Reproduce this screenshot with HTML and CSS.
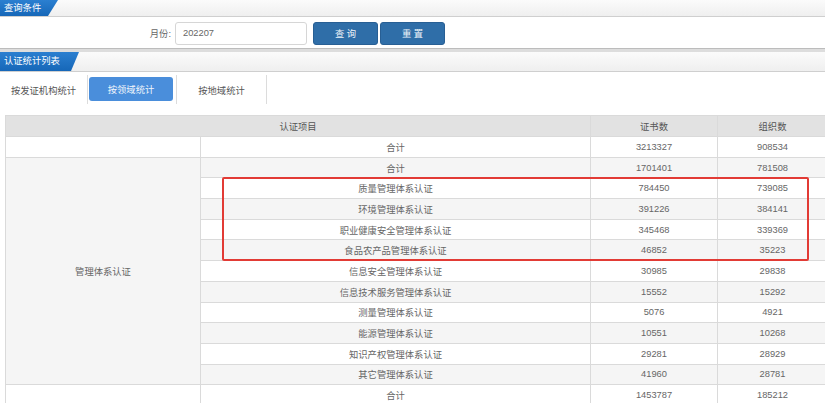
FILE: index.html
```html
<!DOCTYPE html>
<html lang="zh">
<head>
<meta charset="utf-8">
<title>认证统计</title>
<link rel="stylesheet" href="styles.css">
</head>
<body>
<div class="panel-head">
  <span class="panel-tab tab-query">查询条件</span>
</div>
<div class="query-row">
  <label class="q-label" for="month">月份:</label>
  <input class="q-input" id="month" type="text" value="202207">
  <button class="btn btn-search">查 询</button>
  <button class="btn btn-reset">重 置</button>
</div>
<div class="panel-head second">
  <span class="panel-tab tab-list">认证统计列表</span>
</div>
<div class="tabs">
  <div class="tab tab-org">按发证机构统计</div>
  <div class="tab tab-field"><span class="tab-active">按领域统计</span></div>
  <div class="tab tab-region">按地域统计</div>
</div>
<div class="table-wrap">
  <table class="stats">
    <colgroup>
      <col class="c1"><col class="c2"><col class="c3"><col class="c4">
    </colgroup>
    <thead>
      <tr><th colspan="2">认证项目</th><th>证书数</th><th>组织数</th></tr>
    </thead>
    <tbody>
      <tr class="w"><td></td><td>合计</td><td>3213327</td><td>908534</td></tr>
      <tr class="g"><td class="group" rowspan="11">管理体系认证</td><td>合计</td><td>1701401</td><td>781508</td></tr>
      <tr class="w"><td>质量管理体系认证</td><td>784450</td><td>739085</td></tr>
      <tr class="g"><td>环境管理体系认证</td><td>391226</td><td>384141</td></tr>
      <tr class="w"><td>职业健康安全管理体系认证</td><td>345468</td><td>339369</td></tr>
      <tr class="g"><td>食品农产品管理体系认证</td><td>46852</td><td>35223</td></tr>
      <tr class="w"><td>信息安全管理体系认证</td><td>30985</td><td>29838</td></tr>
      <tr class="g"><td>信息技术服务管理体系认证</td><td>15552</td><td>15292</td></tr>
      <tr class="w"><td>测量管理体系认证</td><td>5076</td><td>4921</td></tr>
      <tr class="g"><td>能源管理体系认证</td><td>10551</td><td>10268</td></tr>
      <tr class="w"><td>知识产权管理体系认证</td><td>29281</td><td>28929</td></tr>
      <tr class="g"><td>其它管理体系认证</td><td>41960</td><td>28781</td></tr>
      <tr class="w"><td></td><td>合计</td><td>1453787</td><td>185212</td></tr>
    </tbody>
  </table>
  <div class="highlight"></div>
</div>
</body>
</html>
```
FILE: styles.css
```css
html, body {
  margin: 0;
  padding: 0;
  background: #fff;
  font-family: "Liberation Sans", "Noto Sans CJK SC", sans-serif;
  font-size: 9.3px;
  color: #666;
  overflow: hidden;
}

.panel-head {
  height: 16px;
  border-bottom: 1px solid #cfcfcf;
  background: linear-gradient(#fbfbfb, #efefef);
  display: flex;
}

.panel-head.second {
  height: 19px;
  border-top: 1px solid #bcbcbc;
  padding-top: 3px;
  background: linear-gradient(#dddddd 0, #dddddd 3px, #fbfbfb 3px, #efefef 100%);
}

.panel-tab {
  display: block;
  color: #fff;
  background: linear-gradient(#2b7fd0, #1667b8);
  padding-left: 4px;
  box-sizing: border-box;
  white-space: nowrap;
}

.tab-query {
  width: 58px;
  height: 16px;
  line-height: 16px;
  clip-path: polygon(0 0, 58px 0, 48px 100%, 0 100%);
}

.tab-list {
  width: 79px;
  height: 19px;
  line-height: 19px;
  clip-path: polygon(0 0, 79px 0, 71px 100%, 0 100%);
}

.query-row {
  height: 31px;
  display: flex;
  align-items: center;
}

.q-label {
  width: 172px;
  box-sizing: border-box;
  text-align: right;
  padding-right: 1px;
  color: #666;
  margin-top: 1px;
}

.q-input {
  margin-left: 3px;
  width: 132px;
  height: 23px;
  box-sizing: border-box;
  border: 1px solid #d6d6d6;
  border-radius: 3px;
  padding: 0 7px;
  font: inherit;
  color: #666;
  margin-top: 1px;
}

.btn {
  height: 23px;
  width: 65px;
  box-sizing: border-box;
  border: 1px solid #285f94;
  border-radius: 3px;
  background: #2f6ea8;
  color: #eef3f9;
  font: inherit;
  margin-top: 1px;
  padding: 0;
}

.btn-search { margin-left: 6px; }
.btn-reset { margin-left: 2px; }

.tabs {
  height: 32px;
  display: flex;
}

.tab {
  margin-top: 3px;
  height: 29px;
  box-sizing: border-box;
  border-right: 1px solid #dcdcdc;
  display: flex;
  align-items: center;
  justify-content: center;
  color: #555;
}

.tab-org { width: 88px; }
.tab-field { width: 89px; align-items: flex-start; justify-content: flex-start; }
.tab-region { width: 90px; }

.tab-active {
  display: flex;
  align-items: center;
  justify-content: center;
  width: 84px;
  height: 24px;
  margin: 2px 0 0 1px;
  border-radius: 3px;
  background: #4a8edb;
  color: #f2f6fc;
}

.table-wrap {
  position: relative;
  margin: 11px 0 0 5px;
  width: 822px;
}

.stats {
  border-collapse: collapse;
  table-layout: fixed;
  width: 822px;
}

.c1 { width: 195px; }
.c2 { width: 390px; }
.c3 { width: 127px; }
.c4 { width: 110px; }

.stats th, .stats td {
  border: 1px solid #dadada;
  text-align: center;
  padding: 0;
  font-weight: normal;
  white-space: nowrap;
}

.stats thead tr {
  height: 21px;
}

.stats th {
  background: #e2e2e2;
  color: #555;
}

.stats tbody tr {
  height: 20.7px;
}

.stats tr.w td { background: #fff; }
.stats tr.g td { background: #f5f5f5; }
.stats td.group { background: #f4f4f4; }

.highlight {
  position: absolute;
  left: 217px;
  top: 62px;
  width: 587px;
  height: 84px;
  box-sizing: border-box;
  border: 2px solid #e23b35;
  border-radius: 2px;
  pointer-events: none;
}
```
